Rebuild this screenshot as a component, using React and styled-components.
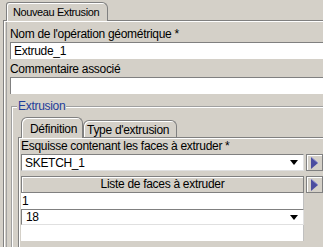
import React from "react";
import styled, { createGlobalStyle } from "styled-components";

const Global = createGlobalStyle`
  html, body {
    margin: 0;
    padding: 0;
    background: #d4d0c8;
    width: 323px;
    height: 247px;
    overflow: hidden;
  }
  * { box-sizing: border-box; }
`;

function Arrow() {
  return (
    <svg width="9" height="12" viewBox="0 0 9 12">
      <path d="M1 0 L8 6 L1 12 Z" fill="#4b4da0" />
      <path d="M1 0 L8 6" stroke="#8c8ed0" strokeWidth="1" />
    </svg>
  );
}

function Caret() {
  return (
    <svg width="8" height="5" viewBox="0 0 8 5">
      <path d="M0 0 H8 L4 5 Z" fill="#000" />
    </svg>
  );
}

function App() {
  return (
    <>
      <Global />
      <Screen>
        <TabBar>
          <TopTab>Nouveau Extrusion</TopTab>
        </TabBar>
        <Panel>
          <Label>Nom de l'opération géométrique *</Label>
          <Field>Extrude_1</Field>
          <Label>Commentaire associé</Label>
          <Field />
          <Group>
            <Legend>Extrusion</Legend>
            <InnerTabs>
              <InnerTab $active>Définition</InnerTab>
              <InnerTab>Type d'extrusion</InnerTab>
            </InnerTabs>
            <InnerPanel>
              <Label>Esquisse contenant les faces à extruder *</Label>
              <Row>
                <Combo>
                  <span>SKETCH_1</span>
                  <Caret />
                </Combo>
                <ArrowButton>
                  <Arrow />
                </ArrowButton>
              </Row>
              <Row>
                <Table>
                  <Header>Liste de faces à extruder</Header>
                  <Cell>1</Cell>
                  <CellCombo>
                    <span>18</span>
                    <Caret />
                  </CellCombo>
                  <Cell />
                </Table>
                <ArrowButton>
                  <Arrow />
                </ArrowButton>
              </Row>
            </InnerPanel>
          </Group>
        </Panel>
      </Screen>
    </>
  );
}

export default App;

const Screen = styled.div`
  width: 323px;
  height: 247px;
  padding: 2px 0 0 3px;
  font-family: "Liberation Sans", Arial, sans-serif;
  font-size: 12px;
  letter-spacing: -0.3px;
  color: #000;
  overflow: hidden;
`;

const TabBar = styled.div`
  display: flex;
  height: 18px;
  padding-left: 3px;
`;

const TopTab = styled.div`
  position: relative;
  z-index: 1;
  height: 19px;
  padding: 3px 8px 0 6px;
  font-size: 11px;
  letter-spacing: -0.4px;
  background: #d4d0c8;
  border: 1px solid #808080;
  border-bottom: none;
  border-radius: 3px 6px 0 0;
  box-shadow: inset 1px 1px 0 #fff;
`;

const Panel = styled.div`
  height: 240px;
  border-left: 1px solid #808080;
  border-top: 1px solid #808080;
  box-shadow: inset 1px 1px 0 #fff, inset 2px 0 0 #d4d0c8, inset 3px 0 0 #a0a0a0;
  padding: 7px 0 0 6px;
  display: flex;
  flex-direction: column;
`;

const Label = styled.div`
  height: 13px;
  line-height: 13px;
  margin-bottom: 1px;
  white-space: nowrap;
`;

const Field = styled.div`
  height: 17px;
  margin: 0 -10px 4px 0;
  padding: 1px 3px;
  background: #fff;
  border-top: 1px solid #808080;
  border-left: 1px solid #808080;
  line-height: 14px;
`;

const Group = styled.div`
  position: relative;
  margin-top: 8px;
  margin-left: 1px;
  border-top: 1px solid #a0a0a0;
  border-left: 1px solid #a0a0a0;
  box-shadow: inset 1px 1px 0 #fff;
  padding: 9px 0 0 6px;
  flex: 1;
`;

const Legend = styled.div`
  position: absolute;
  top: -8px;
  left: 5px;
  padding: 0 1px;
  background: #d4d0c8;
  color: #1f3d9a;
  line-height: 14px;
`;

const InnerTabs = styled.div`
  display: flex;
  align-items: flex-end;
  height: 21px;
  padding-left: 3px;
`;

const InnerTab = styled.div`
  position: relative;
  z-index: 1;
  height: ${(p) => (p.$active ? "21px" : "17px")};
  margin-bottom: ${(p) => (p.$active ? "-1px" : "0")};
  padding: ${(p) => (p.$active ? "4px 5px 0 8px" : "2px 7px 0 3px")};
  background: #d4d0c8;
  border: 1px solid #808080;
  border-bottom: none;
  border-radius: 6px 6px 0 0;
  box-shadow: inset 1px 1px 0 #fff;
  white-space: nowrap;
`;

const InnerPanel = styled.div`
  border-top: 1px solid #808080;
  border-left: 1px solid #808080;
  box-shadow: inset 1px 1px 0 #fff;
  padding: 2px 0 0 2px;
  height: 120px;
  display: flex;
  flex-direction: column;
`;

const Row = styled.div`
  display: flex;
  gap: 2px;
  margin-bottom: 5px;
`;

const Combo = styled.div`
  flex: 1;
  height: 17px;
  display: flex;
  align-items: center;
  justify-content: space-between;
  padding: 0 5px 0 3px;
  background: #fff;
  border: 1px solid #808080;
  border-right-color: #e0e0e0;
  border-bottom-color: #e0e0e0;
`;

const ArrowButton = styled.div`
  width: 17px;
  height: 17px;
  display: flex;
  align-items: center;
  justify-content: center;
  border: 1px solid #808080;
  box-shadow: inset 1px 1px 0 #fff;
  background: #d4d0c8;
`;

const Table = styled.div`
  flex: 1;
  display: flex;
  flex-direction: column;
`;

const Header = styled.div`
  height: 17px;
  line-height: 15px;
  text-align: center;
  border: 1px solid #808080;
  box-shadow: inset 1px 1px 0 #fff;
`;

const Cell = styled.div`
  height: 16px;
  line-height: 16px;
  padding-left: 1px;
  background: #fff;
  border-right: 1px solid #c0c0c0;
`;

const CellCombo = styled.div`
  height: 16px;
  display: flex;
  align-items: center;
  justify-content: space-between;
  padding: 0 5px 0 4px;
  background: #fff;
  border: 1px solid #808080;
  border-right-color: #e0e0e0;
  border-bottom-color: #e0e0e0;
`;
